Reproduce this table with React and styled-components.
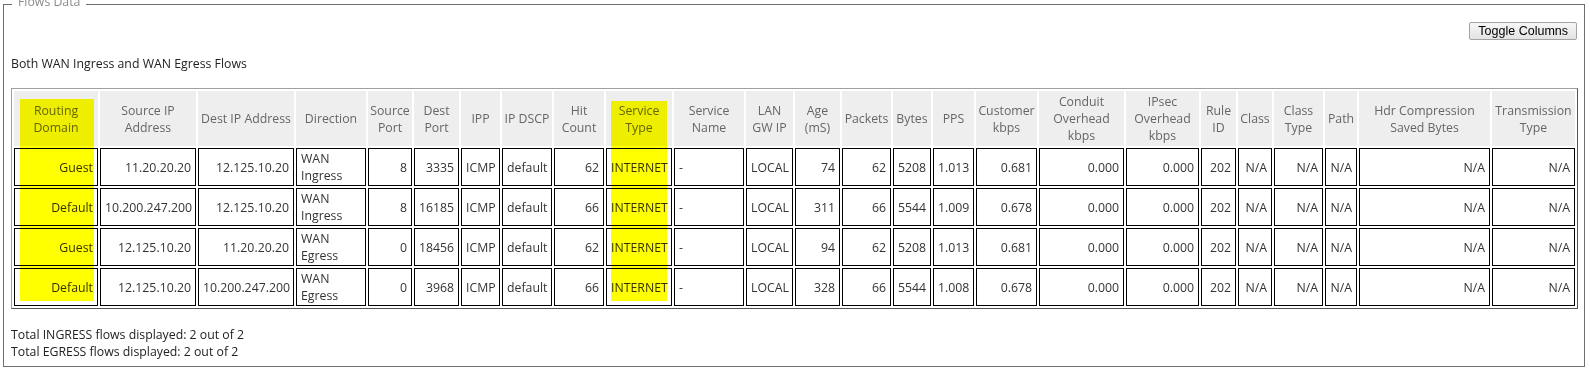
import React from "react";
import styled, { createGlobalStyle } from "styled-components";

const Global = createGlobalStyle`
  html, body {
    margin: 0;
    padding: 0;
    background: #ffffff;
    overflow: hidden;
  }
  body {
    font-family: "Open Sans", "DejaVu Sans", sans-serif;
    font-size: 12.3px;
    color: #222;
  }
  *, *::before, *::after { box-sizing: border-box; }
`;

const Fieldset = styled.fieldset`
  margin: -6px 5px 0 3px;
  padding: 8px 6px 6px 7px;
  border: 1px solid #6f6f6f;
  min-width: 0;
`;

const Legend = styled.legend`
  margin-left: 1px;
  padding: 0 6px 4px;
  font: 12.3px/16px "Open Sans", sans-serif;
  color: #8c8c8c;
`;

const Toolbar = styled.div`
  display: flex;
  justify-content: flex-end;
  margin-right: 1px;
`;

const ToggleButton = styled.button`
  height: 18px;
  padding: 0 8px;
  font: 12.5px/14px "Liberation Sans", Arial, sans-serif;
  color: #000;
  background: linear-gradient(#f7f7f7, #e3e3e3);
  border: 1px solid #a3a3a3;
  border-radius: 2px;
  cursor: pointer;
`;

const Subtitle = styled.div`
  margin-top: 15px;
  line-height: 17px;
  color: #222;
`;

const TableFrame = styled.div`
  position: relative;
  margin-top: 16px;
`;

const Table = styled.table`
  width: 100%;
  table-layout: fixed;
  border-collapse: separate;
  border-spacing: 2px;
  border: 1px solid;
  border-color: #a0a0a0 #555 #555 #a0a0a0;
`;

const Col = styled.col`
  width: ${(p) => p.$w}px;
`;

const HeadCell = styled.th`
  padding: 1px 1px;
  border: 1px solid #eeeeee;
  background: #eeeeee;
  color: #666;
  font-weight: normal;
  font-size: 12.3px;
  line-height: 17px;
  text-align: center;
  vertical-align: middle;
  white-space: nowrap;
`;

const BodyCell = styled.td`
  padding: 1px 4px;
  border: 1px solid #000;
  color: #333;
  font-size: 12.3px;
  line-height: 17px;
  height: 38px;
  text-align: ${(p) => p.$align};
  vertical-align: middle;
  white-space: nowrap;
`;

const Highlight = styled.div`
  position: absolute;
  left: ${(p) => p.$left}px;
  top: ${(p) => p.$top}px;
  width: ${(p) => p.$width}px;
  height: ${(p) => p.$height}px;
  background: #ffff00;
  mix-blend-mode: multiply;
  pointer-events: none;
`;

const Footer = styled.div`
  margin-top: 17px;
  line-height: 17px;
  color: #222;
`;

const columns = [
  { label: ["Routing", "Domain"], w: 84, align: "right" },
  { label: ["Source IP", "Address"], w: 96, align: "right" },
  { label: ["Dest IP Address"], w: 96, align: "right" },
  { label: ["Direction"], w: 70, align: "left" },
  { label: ["Source", "Port"], w: 44, align: "right" },
  { label: ["Dest", "Port"], w: 45, align: "right" },
  { label: ["IPP"], w: 39, align: "left" },
  { label: ["IP DSCP"], w: 50, align: "left" },
  { label: ["Hit", "Count"], w: 50, align: "right" },
  { label: ["Service", "Type"], w: 66, align: "left" },
  { label: ["Service", "Name"], w: 70, align: "left" },
  { label: ["LAN", "GW IP"], w: 47, align: "left" },
  { label: ["Age", "(mS)"], w: 45, align: "right" },
  { label: ["Packets"], w: 49, align: "right" },
  { label: ["Bytes"], w: 38, align: "right" },
  { label: ["PPS"], w: 41, align: "left" },
  { label: ["Customer", "kbps"], w: 61, align: "right" },
  { label: ["Conduit", "Overhead", "kbps"], w: 85, align: "right" },
  { label: ["IPsec", "Overhead", "kbps"], w: 73, align: "right" },
  { label: ["Rule", "ID"], w: 35, align: "right" },
  { label: ["Class"], w: 34, align: "right" },
  { label: ["Class", "Type"], w: 49, align: "right" },
  { label: ["Path"], w: 32, align: "right" },
  { label: ["Hdr Compression", "Saved Bytes"], w: 131, align: "right" },
  { label: ["Transmission", "Type"], w: 83, align: "right" },
];

const tail = ["0.000", "0.000", "202", "N/A", "N/A", "N/A", "N/A", "N/A"];

const rows = [
  ["Guest", "11.20.20.20", "12.125.10.20", ["WAN", "Ingress"], "8", "3335", "ICMP", "default", "62", "INTERNET", "-", "LOCAL", "74", "62", "5208", "1.013", "0.681", ...tail],
  ["Default", "10.200.247.200", "12.125.10.20", ["WAN", "Ingress"], "8", "16185", "ICMP", "default", "66", "INTERNET", "-", "LOCAL", "311", "66", "5544", "1.009", "0.678", ...tail],
  ["Guest", "12.125.10.20", "11.20.20.20", ["WAN", "Egress"], "0", "18456", "ICMP", "default", "62", "INTERNET", "-", "LOCAL", "94", "62", "5208", "1.013", "0.681", ...tail],
  ["Default", "12.125.10.20", "10.200.247.200", ["WAN", "Egress"], "0", "3968", "ICMP", "default", "66", "INTERNET", "-", "LOCAL", "328", "66", "5544", "1.008", "0.678", ...tail],
];

const Lines = ({ lines }) =>
  lines.map((l, i) => (
    <React.Fragment key={i}>
      {i > 0 && <br />}
      {l}
    </React.Fragment>
  ));

export default function App() {
  return (
    <>
      <Global />
      <Fieldset>
        <Legend>Flows Data</Legend>
        <Toolbar>
          <ToggleButton type="button">Toggle Columns</ToggleButton>
        </Toolbar>
        <Subtitle>Both WAN Ingress and WAN Egress Flows</Subtitle>
        <TableFrame>
          <Table>
            <colgroup>
              {columns.map((c, i) => (
                <Col key={i} $w={c.w} />
              ))}
            </colgroup>
            <thead>
              <tr>
                {columns.map((c, i) => (
                  <HeadCell key={i}>
                    <Lines lines={c.label} />
                  </HeadCell>
                ))}
              </tr>
            </thead>
            <tbody>
              {rows.map((r, ri) => (
                <tr key={ri}>
                  {r.map((v, ci) => (
                    <BodyCell key={ci} $align={columns[ci].align}>
                      {Array.isArray(v) ? <Lines lines={v} /> : v}
                    </BodyCell>
                  ))}
                </tr>
              ))}
            </tbody>
          </Table>
          <Highlight $left={9} $top={11} $width={74} $height={202} />
          <Highlight $left={600} $top={13} $width={56} $height={200} />
        </TableFrame>
        <Footer>
          Total INGRESS flows displayed: 2 out of 2
          <br />
          Total EGRESS flows displayed: 2 out of 2
        </Footer>
      </Fieldset>
    </>
  );
}
